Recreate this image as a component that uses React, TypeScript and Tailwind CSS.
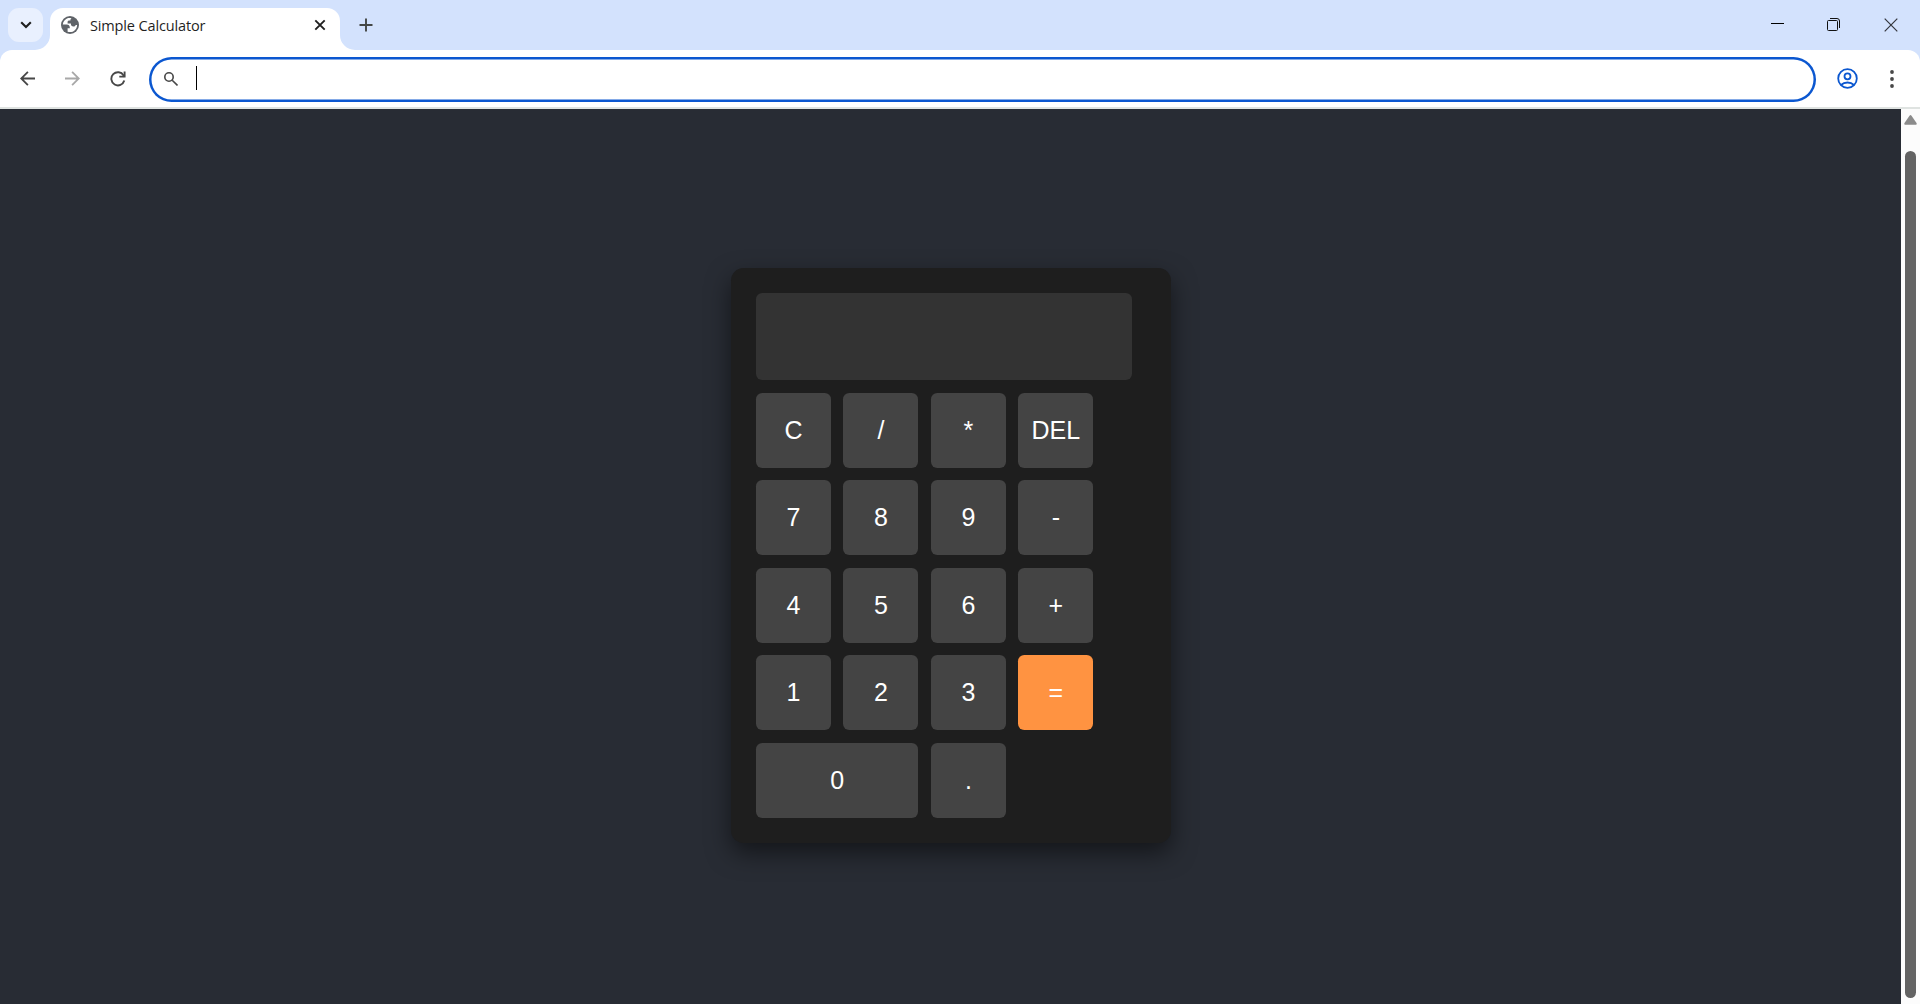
const keys: { label: string; cls?: string }[] = [
  { label: "C" }, { label: "/" }, { label: "*" }, { label: "DEL" },
  { label: "7" }, { label: "8" }, { label: "9" }, { label: "-" },
  { label: "4" }, { label: "5" }, { label: "6" }, { label: "+" },
  { label: "1" }, { label: "2" }, { label: "3" }, { label: "=", cls: "bg-[#ff9341]" },
  { label: "0", cls: "col-span-2 bg-[#444]" }, { label: "." },
];

function TabStrip() {
  return (
    <header className="flex h-[50px] shrink-0 bg-[#d3e2fd]">
      <button className="ml-2 mt-2 flex h-[34px] w-[35px] items-center justify-center rounded-[11px] bg-[#e9f0fe]">
        <svg width="12" height="8" viewBox="0 0 12 8" fill="none" stroke="#1f1f1f" strokeWidth="2.1">
          <path d="M1.2 1.2 6 6l4.800-4.800" />
        </svg>
      </button>
      <div className="flex w-[312px] shrink-0 items-end">
        <div className="h-[15px] w-[7px] shrink-0" />
        <div className="relative flex h-[42.500px] w-[290.400px] shrink-0 items-center rounded-t-[13px] bg-white pl-[11px] pr-[14px]">
          <svg className="absolute -left-[15px] bottom-0" width="15" height="15" viewBox="0 0 15 15" fill="#fff">
            <path d="M15 0v15H0A15 15 0 0 0 15 0Z" />
          </svg>
          <svg className="absolute -right-[15px] bottom-0" width="15" height="15" viewBox="0 0 15 15" fill="#fff">
            <path d="M0 0v15h15A15 15 0 0 1 0 0Z" />
          </svg>
          <svg className="-mt-[8px] shrink-0" width="18" height="18" viewBox="0 0 18 18">
            <circle cx="9" cy="9" r="9" fill="#5f6368" />
            <path fill="#fff" d="M7.100 2.100C4.300 2.900 2 5.500 1.800 8.600h4.100c1.700 0 2.900 1.200 2.900 2.800v.9h-2.200v3.400c2.600.9 5.600.2 7.400-1.800 1.400-1.400 2.100-3.200 2.100-5h-1.400c-.5 1-1.200 1.500-2.300 1.500-1.600 0-2.500-.9-2.500-2.300v-.6H6.600V5.900c0-1 .7-1.500 1.700-1.500h1.100c0-.8.300-1.600 1.100-2.300a7.400 7.400 0 0 0-3.400 0Z" />
          </svg>
          <span className="-mt-[6px] ml-[11px] grow whitespace-nowrap font-['Open_Sans','Noto_Sans',sans-serif] text-[14.500px] tracking-[-0.140px] text-[#1f1f1f]">
            Simple Calculator
          </span>
          <svg className="-mt-[8px] shrink-0" width="12" height="12" viewBox="0 0 12 12" stroke="#1f1f1f" strokeWidth="1.900">
            <path d="m1.300 1.300 9.400 9.400m0-9.400-9.400 9.400" />
          </svg>
        </div>
      </div>
      <svg className="ml-[4px] mt-[18px] shrink-0" width="14" height="14" viewBox="0 0 14 14" stroke="#444746" strokeWidth="1.900">
        <path d="M7 .5v13M.5 7h13" />
      </svg>
      <div className="ml-auto mr-[22px] mt-[17px] flex gap-[43px]">
        <svg width="13" height="14" viewBox="0 0 13 14" stroke="#000" strokeWidth="1">
          <path d="M0 6.500h13" />
        </svg>
        <svg width="14" height="14" viewBox="0 0 14 14" fill="none" stroke="#111">
          <rect x=".5" y="3.500" width="10" height="10" rx="1" />
          <path d="M3 1.500h7a2.500 2.500 0 0 1 2.500 2.500v7" />
        </svg>
        <svg className="mt-px" width="14" height="14" viewBox="0 0 14 14" stroke="#33353d" strokeWidth="1.200">
          <path d="m.7.7 12.600 12.600m0-12.600L.7 13.300" />
        </svg>
      </div>
    </header>
  );
}

function Toolbar() {
  return (
    <div className="shrink-0 bg-[#d3e2fd]">
      <nav className="flex h-[59px] items-center rounded-t-[12px] border-b-2 border-[#dfe3e1] bg-white">
        <svg className="ml-[20px] shrink-0" width="15" height="15" viewBox="0 0 15 15" fill="none" stroke="#474747" strokeWidth="1.800">
          <path d="M7.900.8 1.200 7.500l6.700 6.700M1.400 7.500H15" />
        </svg>
        <svg className="ml-[30px] shrink-0" width="15" height="15" viewBox="0 0 15 15" fill="none" stroke="#a8a8a8" strokeWidth="1.800">
          <path d="m7.100.8 6.700 6.700-6.700 6.700M13.600 7.500H0" />
        </svg>
        <svg className="ml-[29.500px] shrink-0" width="16" height="16" viewBox="0 0 16 16" fill="none" stroke="#474747" strokeWidth="1.900">
          <path d="M14.300 9.600A6.600 6.600 0 1 1 13.600 4.400L14.600 5.600" />
          <path d="M14.600.6V5.600H9.300" />
        </svg>
        <div className="ml-[23.500px] mt-[2px] flex h-[44.500px] w-[1667.400px] shrink-0 items-center rounded-full bg-white shadow-[inset_0_0_0_2.500px_#0b57d0]">
          <svg className="-mt-[2px] ml-[15px]" width="14" height="14" viewBox="0 0 14 14" fill="none" stroke="#474747" strokeWidth="1.600">
            <circle cx="5" cy="5" r="4.200" />
            <path d="m8.200 8.200 5.300 5.300" />
          </svg>
          <span className="-mt-[3px] ml-[18px] h-[24px] w-px bg-black" />
        </div>
        <svg className="ml-[20.500px] shrink-0" width="21" height="21" viewBox="0 0 21 21" fill="none" stroke="#0b57d0" strokeWidth="1.800">
          <circle cx="10.500" cy="10.500" r="9.300" />
          <circle cx="10.500" cy="8.300" r="3" />
          <path d="M4 17c1.800-1.700 4-2.500 6.500-2.500s4.700.8 6.500 2.500" />
        </svg>
        <svg className="ml-[32.500px] shrink-0" width="4" height="18" viewBox="0 0 4 18" fill="#474747">
          <circle cx="2" cy="2" r="1.900" />
          <circle cx="2" cy="9" r="1.900" />
          <circle cx="2" cy="16" r="1.900" />
        </svg>
      </nav>
    </div>
  );
}

function Calculator() {
  return (
    <section className="h-[575px] w-[440px] rounded-[12.500px] bg-[#1e1e1e] p-[25px] font-['Liberation_Sans',Arial,sans-serif] text-[25px] text-white shadow-[0_10px_25px_rgba(0,0,0,0.5)]">
      <div className="mb-[13px] h-[87px] w-[376px] rounded-[6.250px] bg-[#333]" />
      <div className="grid w-max grid-cols-[repeat(4,75px)] auto-rows-[75px] gap-[12.450px]">
        {keys.map(({ label, cls = "bg-[#444]" }) => (
          <button key={label} className={`flex items-center justify-center rounded-[6.250px] ${cls}`}>
            {label}
          </button>
        ))}
      </div>
    </section>
  );
}

export default function App() {
  return (
    <div className="flex h-[1004px] w-[1920px] flex-col overflow-hidden">
      <TabStrip />
      <Toolbar />
      <div className="flex min-h-0 grow">
        <main className="flex grow items-start justify-center bg-[#282c34] pl-px pt-[159px]">
          <Calculator />
        </main>
        <aside className="flex w-[19px] shrink-0 flex-col bg-[#fcfcfc] pl-[3px]">
          <svg className="mt-[6px]" width="13" height="10" viewBox="0 0 13 10" fill="#8b8b8b">
            <path d="M5.500.7a1.300 1.300 0 0 1 2 0l5 7.200c.5.900.1 1.800-.9 1.800H1.400C.4 9.700 0 8.800.5 7.900Z" />
          </svg>
          <div className="ml-px mt-[26px] h-[847px] w-[11px] rounded-full bg-[#636363]" />
        </aside>
      </div>
    </div>
  );
}
